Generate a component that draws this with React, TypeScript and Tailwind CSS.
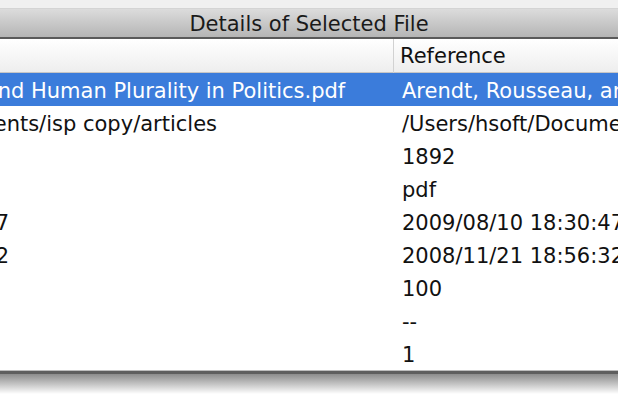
import * as React from 'react';

const rows = [
  { selected: 'Arendt, Rousseau, and Human Plurality in Politics.pdf', reference: 'Arendt, Rousseau, and Human Plurality in Politics.pdf' },
  { selected: '/Users/hsoft/Documents/isp copy/articles', reference: '/Users/hsoft/Documents/isp copy/articles' },
  { selected: '1892', reference: '1892' },
  { selected: 'pdf', reference: 'pdf' },
  { selected: '2009/08/10 18:30:47', reference: '2009/08/10 18:30:47' },
  { selected: '2008/11/21 18:56:32', reference: '2008/11/21 18:56:32' },
  { selected: '100', reference: '100' },
  { selected: '--', reference: '--' },
  { selected: '1', reference: '1' },
];

export default function App() {
  return (
    <div className="w-[618px] h-[394px] overflow-hidden bg-white font-['DejaVu_Sans',sans-serif] text-[#111]">
      {/* window title strip */}
      <div className="h-[9px] bg-[#f0f0f0] border-b border-[#d4d4d4]" />
      <div className="h-[28px] pt-[3px] flex items-center justify-center bg-linear-to-b from-[#dcdcdc] to-[#b5b5b5] text-[21px] text-[#1a1a1a]">
        Details of Selected File
      </div>
      <div className="h-[2px] bg-[#5a5a5a]" />

      {/* table, scrolled horizontally */}
      <div className="overflow-hidden">
        <div className="-ml-[222px] w-[1120px]">
          <div className="grid grid-cols-[615px_505px] h-[34px] border-b border-[#c6c6c6] bg-linear-to-b from-white to-[#eeeeee] text-[21px]">
            <div className="pl-[9px] pt-[2px] flex items-center whitespace-nowrap">Selected</div>
            <div className="border-l border-[#d2d2d2] pl-[6px] pt-[2px] flex items-center whitespace-nowrap">Reference</div>
          </div>
          {rows.map((row, i) => (
            <div
              key={i}
              className={
                i === 0
                  ? 'grid grid-cols-[615px_505px] h-[33px] bg-[#3b7cdb] text-white text-[21px]'
                  : 'grid grid-cols-[615px_505px] h-[33px] text-[21px]'
              }
            >
              <div className="pl-[9px] pt-[4px] flex items-center whitespace-nowrap overflow-hidden">{row.selected}</div>
              <div className="pl-[9px] pt-[4px] flex items-center whitespace-nowrap overflow-hidden">{row.reference}</div>
            </div>
          ))}
        </div>
      </div>

      {/* bottom edge and shadow */}
      <div className="h-[1px] bg-[#bdbdbd]" />
      <div className="h-[3px] bg-[#5e5e5e]" />
      <div className="h-[20px] bg-linear-to-b from-[#8c8c8c] to-white" />
    </div>
  );
}
